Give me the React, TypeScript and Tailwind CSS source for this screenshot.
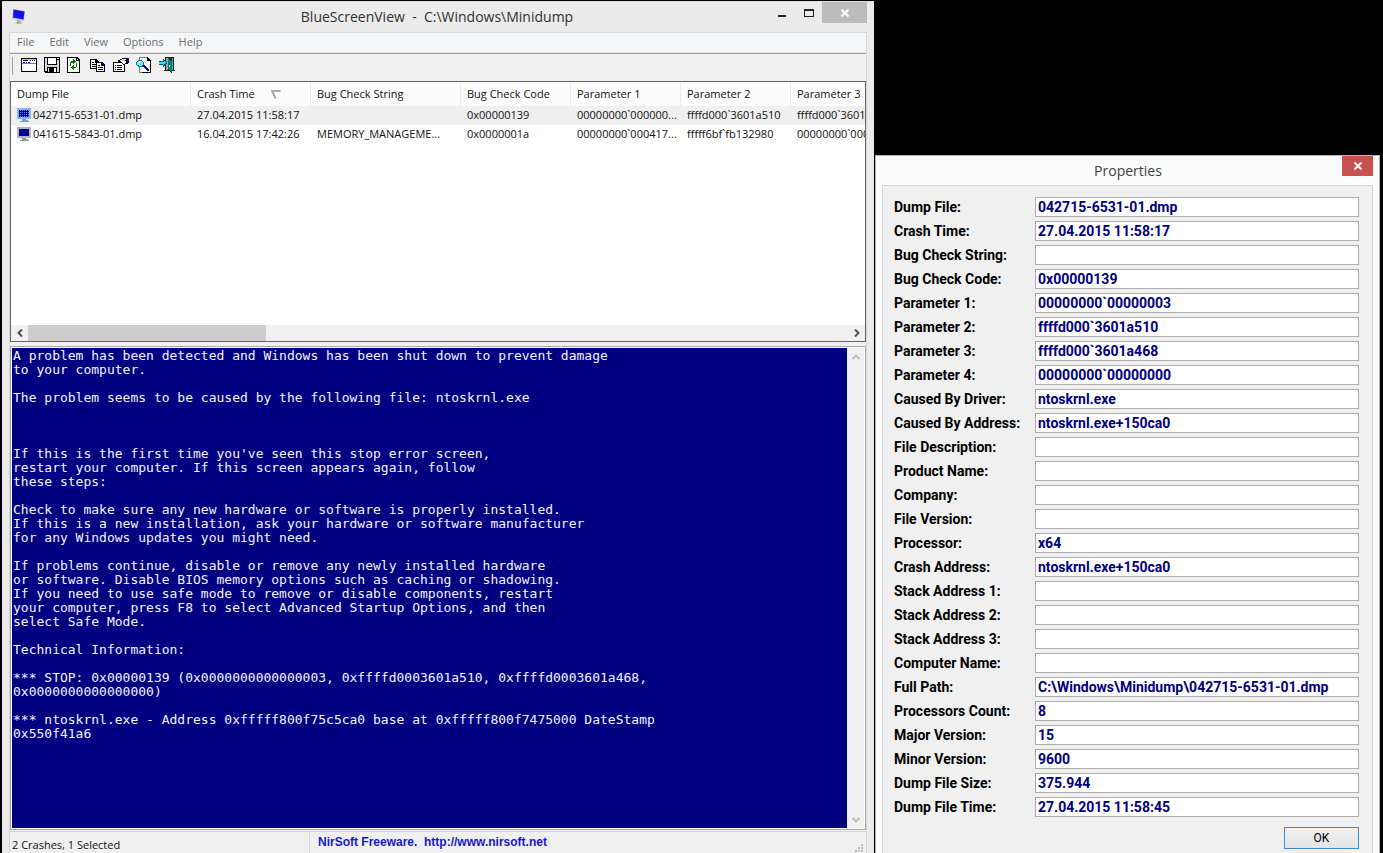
import type { ReactNode } from "react";

const MENU = ["File", "Edit", "View", "Options", "Help"];

const COLUMNS = [
  { label: "Dump File", width: "w-[180px]" },
  { label: "Crash Time", width: "w-[120px]" },
  { label: "Bug Check String", width: "w-[150px]" },
  { label: "Bug Check Code", width: "w-[110px]" },
  { label: "Parameter 1", width: "w-[110px]" },
  { label: "Parameter 2", width: "w-[110px]" },
  { label: "Parameter 3", width: "w-[110px]" },
];

const CRASHES = [
  {
    selected: true,
    cells: [
      "042715-6531-01.dmp",
      "27.04.2015 11:58:17",
      "",
      "0x00000139",
      "00000000`000000...",
      "ffffd000`3601a510",
      "ffffd000`3601",
    ],
  },
  {
    selected: false,
    cells: [
      "041615-5843-01.dmp",
      "16.04.2015 17:42:26",
      "MEMORY_MANAGEME...",
      "0x0000001a",
      "00000000`000417...",
      "fffff6bf`fb132980",
      "00000000`000",
    ],
  },
];

const PROPERTIES: [string, string][] = [
  ["Dump File:", "042715-6531-01.dmp"],
  ["Crash Time:", "27.04.2015 11:58:17"],
  ["Bug Check String:", ""],
  ["Bug Check Code:", "0x00000139"],
  ["Parameter 1:", "00000000`00000003"],
  ["Parameter 2:", "ffffd000`3601a510"],
  ["Parameter 3:", "ffffd000`3601a468"],
  ["Parameter 4:", "00000000`00000000"],
  ["Caused By Driver:", "ntoskrnl.exe"],
  ["Caused By Address:", "ntoskrnl.exe+150ca0"],
  ["File Description:", ""],
  ["Product Name:", ""],
  ["Company:", ""],
  ["File Version:", ""],
  ["Processor:", "x64"],
  ["Crash Address:", "ntoskrnl.exe+150ca0"],
  ["Stack Address 1:", ""],
  ["Stack Address 2:", ""],
  ["Stack Address 3:", ""],
  ["Computer Name:", ""],
  ["Full Path:", "C:\\Windows\\Minidump\\042715-6531-01.dmp"],
  ["Processors Count:", "8"],
  ["Major Version:", "15"],
  ["Minor Version:", "9600"],
  ["Dump File Size:", "375.944"],
  ["Dump File Time:", "27.04.2015 11:58:45"],
];

const STOP_TEXT = `A problem has been detected and Windows has been shut down to prevent damage
to your computer.

The problem seems to be caused by the following file: ntoskrnl.exe



If this is the first time you've seen this stop error screen,
restart your computer. If this screen appears again, follow
these steps:

Check to make sure any new hardware or software is properly installed.
If this is a new installation, ask your hardware or software manufacturer
for any Windows updates you might need.

If problems continue, disable or remove any newly installed hardware
or software. Disable BIOS memory options such as caching or shadowing.
If you need to use safe mode to remove or disable components, restart
your computer, press F8 to select Advanced Startup Options, and then
select Safe Mode.

Technical Information:

*** STOP: 0x00000139 (0x0000000000000003, 0xffffd0003601a510, 0xffffd0003601a468,
0x0000000000000000)

*** ntoskrnl.exe - Address 0xfffff800f75c5ca0 base at 0xfffff800f7475000 DateStamp
0x550f41a6`;

function Glyph({ children }: { children: ReactNode }) {
  return (
    <svg viewBox="0 0 16 16" width="16" height="16" fill="none" shapeRendering="crispEdges" aria-hidden="true">
      {children}
    </svg>
  );
}

const TOOLS: { label: string; icon: ReactNode }[] = [
  {
    label: "Advanced Options",
    icon: (
      <Glyph>
        <path fill="#000" d="M0 1h16v14H0z" />
        <path fill="#fff" d="M1 2h14v12H1z" />
        <path fill="#c0c0d8" d="M1 2h14v1H1z" />
        <path fill="#000080" d="M2 3h5v1H2zM9 3h1v1H9zM11 3h1v1h-1zM13 3h1v1h-1zM2 5h2v1H2zM5 5h1v1H5zM7 5h2v1H7z" />
        <path fill="#808080" d="M1 6h14v1H1z" />
      </Glyph>
    ),
  },
  {
    label: "Save",
    icon: (
      <Glyph>
        <path fill="#000" d="M0 0h16v16H1v-1H0z" />
        <path fill="#d8d8d8" d="M1 1h2v13H1zM13 3h2v12h-2z" />
        <path fill="#fff" d="M4 1h8v6H4zM13 1h2v1h-2z" />
        <path fill="#d8d8d8" d="M3 8h10v2H3z" />
        <path fill="#fff" d="M10 11h2v4h-2z" />
        <path fill="#d8d8d8" d="M4 11h1v4H4z" />
      </Glyph>
    ),
  },
  {
    label: "Refresh",
    icon: (
      <Glyph>
        <path fill="#000" d="M0 0h10l3 3v13H0z" />
        <path fill="#fff" d="M1 1h8v3h3v11H1z" />
        <path fill="#fff" d="M10 2h1v1h-1z" />
        <path
          fill="#008000"
          d="M3 5h1V4h2V2h1v1h1v1h1v1H8v1H7v1H6V6H4v3H3zM9 6h1v4H9v1H7v2H6v-1H5v-1H4v-1h1V9h1V8h1v2h2z"
        />
      </Glyph>
    ),
  },
  {
    label: "Copy Selected Items",
    icon: (
      <Glyph>
        <path fill="#000" d="M0 2h6l3 3v7H0z" />
        <path fill="#fff" d="M1 3h4v3h3v5H1z" />
        <path fill="#000" d="M2 5h2v1H2zM2 7h5v1H2zM2 9h5v1H2z" />
        <path fill="#000040" d="M6 5h6l3 3v7H6z" />
        <path fill="#fff" d="M7 6h4v3h3v5H7z" />
        <path fill="#000" d="M8 8h2v1H8zM8 10h5v1H8zM8 12h5v1H8z" />
      </Glyph>
    ),
  },
  {
    label: "Properties",
    icon: (
      <Glyph>
        <path fill="#000" d="M0 5h12v10H0z" />
        <path fill="#fff" d="M1 6h10v8H1z" />
        <path fill="#000" d="M2 8h1v1H2zM4 8h5v1H4zM2 10h1v1H2zM4 10h5v1H4zM2 12h1v1H2zM4 12h5v1H4z" />
        <path fill="#000" d="M5 3h2V2h2V1h5v1h1v5h-3v1h-2V7H9V6H7V5H5z" />
        <path fill="#fff" d="M7 3h2v1H7zM9 2h4v1H9zM8 4h5v1H8zM9 5h4v1H9zM10 6h2v1h-2z" />
        <path fill="#c0c0c0" d="M9 3h3v1H9z" />
        <path fill="#000080" d="M14 1h2v5h-2z" />
      </Glyph>
    ),
  },
  {
    label: "Find",
    icon: (
      <Glyph>
        <path fill="#808080" d="M3 0h9v1H4v14h10v1H3z" />
        <path fill="#fff" d="M4 1h8l2 2v12H4z" />
        <path fill="#000" d="M11 0h1v1h1v1h1v1h1v13H6v-1h8V4h-3z" />
        <path fill="#008080" d="M2 3h4v1h1v1h1v4H7v1H2V9H1V8H0V5h1V4h1z" />
        <path fill="#7fe5f5" d="M2 4h4v1h1v3H6v1H3V8H1V5h1z" />
        <path fill="#fff" d="M3 4h2v1H4v1H2V5h1z" />
        <path fill="#0000a8" d="M7 8h2v1h1v1h1v1h1v1h1v2h-2v-1h-1v-1H9v-1H8v-1H7z" />
      </Glyph>
    ),
  },
  {
    label: "Exit",
    icon: (
      <Glyph>
        <path fill="#202020" d="M6 0h9v13h1v1h-3v2h-1v-1h-1v-1H5v-1h1z" />
        <path fill="#a0a0a0" d="M7 1h2v12H7z" />
        <path fill="#008080" d="M9 1h1v1h1v1h1v1h1v11h-1v-1h-1v-1h-1v-1H9z" />
        <path fill="#40b0b0" d="M13 1h1v12h-1z" />
        <path fill="#fff" d="M10 8h1v2h-1z" />
        <path fill="#006070" d="M0 4h4V2h1v1h1v1h1v1h1v2H7v1H6v1H5v1H4V8H0z" />
        <path fill="#20e8f0" d="M0 5h5V4h1v1h1v1H6v1H5v1H4V7H0z" />
      </Glyph>
    ),
  },
];

function MonitorIcon({ selected }: { selected: boolean }) {
  return (
    <svg viewBox="0 0 14 15" width="14" height="15" className="shrink-0" shapeRendering="crispEdges" aria-hidden="true">
      <path fill={selected ? "#8db4e8" : "#b4b4bc"} d="M0 0h14v11H0z" />
      <path fill="#000090" d="M2 2h10v7H2z" />
      <path fill={selected ? "#7c9fc8" : "#9a9a9a"} d="M5 11h4v1h2v1h1v1H3v-1h2z" />
      {selected && (
        <path
          fill="#5f8ff0"
          d="M3 2h1v1H3zM5 2h1v1H5zM7 2h1v1H7zM9 2h1v1H9zM11 2h1v1h-1zM3 4h1v1H3zM5 4h1v1H5zM7 4h1v1H7zM9 4h1v1H9zM11 4h1v1h-1zM3 6h1v1H3zM5 6h1v1H5zM7 6h1v1H7zM9 6h1v1H9zM11 6h1v1h-1zM3 8h1v1H3zM5 8h1v1H5zM7 8h1v1H7zM9 8h1v1H9zM11 8h1v1h-1z"
        />
      )}
    </svg>
  );
}

function Chevron({ d, muted = false }: { d: string; muted?: boolean }) {
  return (
    <svg viewBox="0 0 8 8" width="8" height="8" fill="none" stroke={muted ? "#bdbdbd" : "#505050"} strokeWidth="2" aria-hidden="true">
      <path d={d} />
    </svg>
  );
}

function CloseGlyph() {
  return (
    <svg viewBox="0 0 8 8" width="8" height="8" fill="none" stroke="#fff" strokeWidth="2" aria-hidden="true">
      <path d="M0.5 0.5l7 7M7.5 0.5l-7 7" />
    </svg>
  );
}

function TitleBar() {
  return (
    <header className="flex h-[30px] shrink-0 items-start pl-2.5">
      <svg viewBox="0 0 14 16" width="14" height="16" className="mt-1.5 shrink-0" aria-hidden="true">
        <path fill="#c4c4cc" d="M1 1l12 2-1 10-12-2z" />
        <path fill="#1212e0" d="M1.500 1.500l11 2-1 8-10.500-2z" />
        <path fill="#a8a8a8" d="M5 12l4 1v1l2 1-5 1-3-1 2-1z" />
      </svg>
      <h1 className="flex-1 pt-[5px] pl-20 text-center text-[14px] leading-5 whitespace-pre text-[#303030]">
        {"BlueScreenView  -  C:\\Windows\\Minidump"}
      </h1>
      <div className="flex h-[21px]">
        <button type="button" aria-label="Minimize" className="flex w-[27px] items-end justify-center pb-1.5">
          <span className="h-0.5 w-2 bg-[#222]" />
        </button>
        <button type="button" aria-label="Maximize" className="flex w-[27px] items-center justify-center">
          <span className="h-2 w-2.5 border border-t-2 border-[#222]" />
        </button>
        <button type="button" aria-label="Close" className="mr-[7px] flex w-[45px] items-center justify-center bg-[#bcbcbc]">
          <CloseGlyph />
        </button>
      </div>
    </header>
  );
}

function CrashList() {
  return (
    <section className="flex h-[261px] shrink-0 flex-col overflow-hidden border border-[#666] bg-white">
      <div className="flex-1 overflow-hidden">
        <table className="w-[890px] table-fixed border-separate border-spacing-0 text-left text-[11px] text-[#111]">
          <thead>
            <tr className="h-6 bg-[#fcfcfd]">
              {COLUMNS.map((col) => (
                <th key={col.label} scope="col" className={`${col.width} border-r border-[#e3ebf5] px-1.5 py-0 font-normal`}>
                  <span className="flex items-center">
                    {col.label}
                    {col.label === "Crash Time" && (
                      <svg viewBox="0 0 10 9" width="10" height="9" className="ml-4" aria-hidden="true">
                        <path d="M9.500 1H1l3.500 7.500" fill="none" stroke="#a8a8a8" strokeWidth="2" />
                      </svg>
                    )}
                  </span>
                </th>
              ))}
            </tr>
          </thead>
          <tbody>
            {CRASHES.map((crash) => (
              <tr key={crash.cells[0]} className={crash.selected ? "h-[19px] bg-[#efefef]" : "h-[19px]"}>
                {crash.cells.map((cell, i) => (
                  <td key={COLUMNS[i].label} className="px-1.5 py-0 whitespace-nowrap">
                    <span className="flex items-center gap-0.5">
                      {i === 0 && <MonitorIcon selected={crash.selected} />}
                      {cell}
                    </span>
                  </td>
                ))}
              </tr>
            ))}
          </tbody>
        </table>
      </div>
      <div className="flex h-4 shrink-0 bg-[#f0f0f0]">
        <button type="button" aria-label="Scroll left" className="flex w-[17px] items-center justify-center">
          <Chevron d="M6 0.500L2.500 4L6 7.500" />
        </button>
        <div className="flex-1">
          <div className="h-full w-[29%] bg-[#cdcdcd]" />
        </div>
        <button type="button" aria-label="Scroll right" className="flex w-[17px] items-center justify-center">
          <Chevron d="M2 0.500L5.500 4L2 7.500" />
        </button>
      </div>
    </section>
  );
}

function StopScreen() {
  return (
    <section className="mt-1 flex min-h-0 flex-1 border border-[#a9a9b4] bg-white p-px">
      <pre className="flex-1 overflow-hidden bg-[#000080] px-px py-px font-['DejaVu_Sans_Mono',monospace] text-[13px] leading-[14px] text-[#f4f4ff]">
        {STOP_TEXT}
      </pre>
      <div className="flex w-[17px] flex-col justify-between bg-[#f0f0f0]">
        <button type="button" disabled aria-label="Scroll up" className="flex h-[17px] items-center justify-center">
          <Chevron d="M0.500 6L4 2.500L7.500 6" muted />
        </button>
        <button type="button" disabled aria-label="Scroll down" className="flex h-[17px] items-center justify-center">
          <Chevron d="M0.500 2L4 5.500L7.500 2" muted />
        </button>
      </div>
    </section>
  );
}

function StatusBar() {
  return (
    <footer className="mt-px flex h-[22px] shrink-0 border-t border-[#d5d5d5] bg-[#f0f0f0] text-[11px]">
      <p className="w-[300px] border-r border-[#d5d5d5] pt-1 pl-0.5 leading-[18px] text-[#111]">2 Crashes, 1 Selected</p>
      <p className="flex-1 pt-0.5 pl-2 font-['Liberation_Sans',Arial,sans-serif] text-[12px] leading-4 font-bold whitespace-pre text-[#1818c8]">
        {"NirSoft Freeware.  "}
        <a href="http://www.nirsoft.net">http://www.nirsoft.net</a>
      </p>
      <svg viewBox="0 0 9 9" width="9" height="9" fill="#bcbcbc" className="mr-0.5 self-end" shapeRendering="crispEdges" aria-hidden="true">
        <path d="M6 0h2v2H6zM3 3h2v2H3zM6 3h2v2H6zM0 6h2v2H0zM3 6h2v2H3zM6 6h2v2H6z" />
      </svg>
    </footer>
  );
}

function MainWindow() {
  return (
    <main className="mt-px ml-0.5 flex min-w-0 flex-1 flex-col border-t border-[#dcdcdc] bg-[#ebebeb]">
      <TitleBar />
      <div className="mr-[7px] ml-[7px] flex min-h-0 flex-1 flex-col border border-b-0 border-[#d6d6d6] bg-[#f0f0f0]">
        <nav className="flex h-5 shrink-0 items-center gap-px border-b border-[#e4e4e4] bg-[#f5f6f7] text-[11px] text-[#6d6d6d]">
          {MENU.map((item) => (
            <button key={item} type="button" className="px-[7px]">
              {item}
            </button>
          ))}
        </nav>
        <div className="flex h-7 shrink-0 items-start border-t border-[#a0a0a0] pt-[3px] pl-0.5">
          <span className="mr-2 h-[18px] w-px bg-[#a0a0a0]" />
          {TOOLS.map((tool) => (
            <button key={tool.label} type="button" aria-label={tool.label} className="flex w-[23px] justify-start">
              {tool.icon}
            </button>
          ))}
        </div>
        <CrashList />
        <StopScreen />
        <StatusBar />
      </div>
    </main>
  );
}

function PropertiesDialog() {
  return (
    <aside className="mt-[155px] mr-[3px] ml-px flex w-[505px] shrink-0 flex-col border border-b-0 border-[#b4b4b4] bg-[#fbfbfb] px-1.5">
      <header className="flex h-[29px] shrink-0">
        <h2 className="flex-1 pt-1 pl-8 text-center text-[14px] leading-[22px] text-[#404040]">Properties</h2>
        <button type="button" aria-label="Close properties" className="flex h-5 w-[31px] items-center justify-center bg-[#c75050]">
          <CloseGlyph />
        </button>
      </header>
      <form className="flex flex-1 flex-col border border-b-0 border-[#d4d4d4] bg-[#f0f0f0] pt-[11px] pr-[13px] pl-[11px] font-['Roboto',sans-serif]">
        <div className="flex flex-col gap-1 text-[14px] font-bold">
          {PROPERTIES.map(([label, value], i) => (
            <div key={label} className="flex h-5 items-center">
              <label htmlFor={`property-${i}`} className="w-[141px] shrink-0 text-black">
                {label}
              </label>
              <input
                id={`property-${i}`}
                type="text"
                readOnly
                value={value}
                className="h-5 min-w-0 flex-1 border border-[#abadb3] bg-white px-0.5 text-[#000080] outline-none"
              />
            </div>
          ))}
        </div>
        <button
          type="button"
          className="mt-2.5 h-[22px] w-[75px] self-end border border-[#3c8cd8] bg-linear-to-b from-[#f0f0f0] to-[#e4e4e4] text-[12px] leading-5 text-black"
        >
          OK
        </button>
      </form>
    </aside>
  );
}

export default function App() {
  return (
    <div className="flex h-screen overflow-hidden bg-black font-['Open_Sans','Noto_Sans',sans-serif]">
      <MainWindow />
      <PropertiesDialog />
    </div>
  );
}
